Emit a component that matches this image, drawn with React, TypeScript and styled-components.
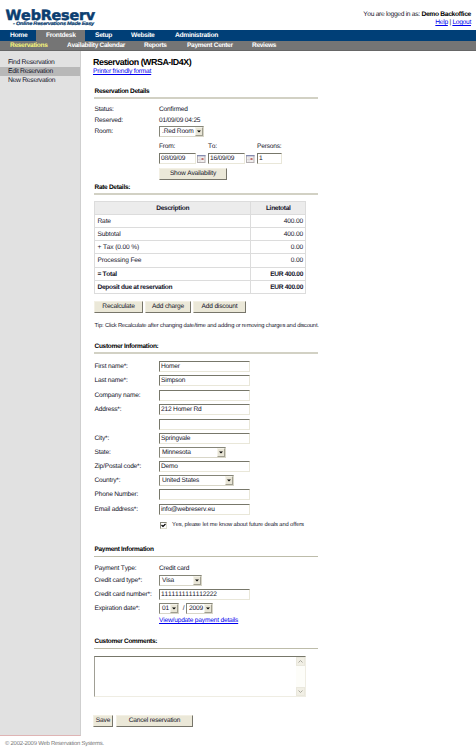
import React from 'react';
import styled, { createGlobalStyle } from 'styled-components';

const Global = createGlobalStyle`
  * { box-sizing: border-box; }
  html, body { margin: 0; padding: 0; background: #fff; }
  body, input, button, textarea {
    font-family: "Liberation Sans", Arial, sans-serif;
    font-size: 6.6px;
    line-height: 11px;
    letter-spacing: -0.19px;
    font-kerning: none;
    color: #14142a;
    text-rendering: geometricPrecision;
  }
  body { overflow: hidden; }
  svg { flex: none; }
`;

const Page = styled.div`
  width: 476px;
  height: 748px;
  display: flex;
  flex-direction: column;
  white-space: nowrap;
`;
const Header = styled.header`
  flex: none;
  height: 30px;
  display: flex;
  justify-content: space-between;
  padding: 8px 5px 0 5px;
`;
const Account = styled.div`
  text-align: right;
  font-size: 6.7px;
  letter-spacing: -0.31px;
  line-height: 8px;
  padding-top: 3px;
  b { color: #000; }
`;
const Link = styled.a`
  color: #0000ee;
  text-decoration: underline;
  text-decoration-thickness: 1px;
  text-underline-offset: 0.5px;
`;
const NavBar = styled.nav<{ $sub?: boolean }>`
  display: flex;
  flex: none;
  height: ${p => (p.$sub ? 10 : 11)}px;
  line-height: ${p => (p.$sub ? 10 : 11)}px;
  background: ${p => (p.$sub ? '#757575' : '#003f77')};
  box-shadow: ${p => (p.$sub ? 'inset 0 -1px #666' : 'none')};
  color: #fff;
  font-weight: bold;
  letter-spacing: -0.3px;
  font-size: ${p => (p.$sub ? 6.55 : 6.7)}px;
`;
const NavItem = styled.span<{ $w: number; $pad?: number; $active?: boolean; $hot?: boolean }>`
  width: ${p => p.$w}px;
  padding-left: ${p => p.$pad ?? 0}px;
  background: ${p => (p.$active ? '#757575' : 'transparent')};
  color: ${p => (p.$hot ? '#f4f47c' : 'inherit')};
`;
const Body = styled.div`
  flex: none;
  display: flex;
  height: 685px;
`;
const Side = styled.aside`
  width: 81px;
  background: #e1e1e1;
  border-right: 1px solid #cfcfcf;
  border-bottom: 1px solid #dfb4b4;
  padding-top: 7px;
`;
const SideItem = styled.div<{ $active?: boolean }>`
  height: 9px;
  line-height: 9px;
  padding-left: 8px;
  font-size: 6.75px;
  letter-spacing: -0.28px;
  background: ${p => (p.$active ? '#b8b8b8' : 'transparent')};
`;
const Main = styled.main`
  padding: 6px 0 0 13px;
  width: 250px;
`;
const Title = styled.h1`
  margin: 0 0 0 -1px;
  font-size: 8.9px;
  letter-spacing: -0.47px;
  line-height: 10px;
  height: 10px;
  color: #000;
`;
const SubLink = styled.div`
  margin: 1px 0 0 -1px;
  height: 8px;
  line-height: 8px;
  font-size: 6.7px;
  letter-spacing: -0.25px;
`;
const Heading = styled.h2<{ $mt: number; $thin?: boolean }>`
  margin: ${p => p.$mt}px 0 0;
  width: 224px;
  height: 13px;
  line-height: 11px;
  padding-left: 0.5px;
  font-size: 6.5px;
  letter-spacing: -0.29px;
  color: #000;
  border-bottom: ${p => (p.$thin ? '1px solid #bdbcaa' : '2px solid #d2d1c4')};
`;
const Row = styled.div<{ $mt?: number }>`
  margin-top: ${p => p.$mt ?? 0}px;
  height: 11px;
  display: flex;
  align-items: center;
`;
const Label = styled.label`
  flex: none;
  width: 65px;
  padding-left: 0.5px;
`;
const Field = styled.input<{ $w?: number }>`
  flex: none;
  width: ${p => p.$w ?? 91}px;
  height: 11px;
  line-height: 8px;
  margin: 0;
  padding: 0 0 0 1px;
  border: 1px solid;
  border-color: #77776a #e9e7d9 #e9e7d9 #77776a;
  border-radius: 0;
  outline: 0;
  background: #fff;
`;
const SelectBox = styled.div<{ $w: number }>`
  flex: none;
  display: flex;
  justify-content: space-between;
  width: ${p => p.$w}px;
  height: 11px;
  line-height: 9px;
  padding-left: 2px;
  border: 1px solid;
  border-color: #858578 #d8d6c8 #d8d6c8 #858578;
  background: #fff;
`;
const Drop = styled.span`
  width: 8px;
  height: 9px;
  display: flex;
  align-items: center;
  justify-content: center;
  background: #e8e5d6;
  border: 1px solid;
  border-color: #f5f3ea #a09e90 #a09e90 #f5f3ea;
`;
const Gap = styled.span<{ $w: number }>`
  flex: none;
  width: ${p => p.$w}px;
  text-align: right;
`;
const Caption = styled.span<{ $w: number }>`
  width: ${p => p.$w}px;
`;
const CalendarSlot = styled.span<{ $w: number }>`
  flex: none;
  width: ${p => p.$w}px;
  padding-left: 1px;
  display: flex;
`;
const Button = styled.button<{ $w: number }>`
  flex: none;
  width: ${p => p.$w}px;
  height: 12px;
  line-height: 10px;
  padding: 0;
  border: 1px solid;
  border-color: #f3f0e4 #77756a #77756a #f3f0e4;
  border-radius: 0;
  background: #ebe8d8;
  text-align: center;
`;
const Buttons = styled.div<{ $mt: number; $gap: number; $ml?: number }>`
  display: flex;
  gap: ${p => p.$gap}px;
  margin: ${p => p.$mt}px 0 0 ${p => p.$ml ?? 0}px;
`;
const Table = styled.div`
  display: grid;
  grid-template-columns: 156px 55px;
  grid-template-rows: 13px repeat(6, 13.17px);
  width: 212px;
  margin-top: 6px;
  border: solid #dcdcdc;
  border-width: 1px 0 0 1px;
`;
const Cell = styled.div<{ $head?: boolean; $num?: boolean; $bold?: boolean }>`
  border: solid #dcdcdc;
  border-width: 0 1px 1px 0;
  padding: 0 2px 0 2.5px;
  line-height: 13px;
  font-size: 6.6px;
  letter-spacing: ${p => (p.$head || p.$bold ? -0.31 : -0.14)}px;
  background: ${p => (p.$head ? '#ececec' : '#fff')};
  text-align: ${p => (p.$head ? 'center' : p.$num ? 'right' : 'left')};
  font-weight: ${p => (p.$head || p.$bold ? 'bold' : 'normal')};
`;
const Tip = styled.div`
  margin-top: 7px;
  height: 11px;
  line-height: 12px;
  font-size: 5.8px;
  letter-spacing: -0.175px;
  padding-left: 0.5px;
`;
const Check = styled.span`
  width: 7px;
  height: 7px;
  margin: 0 5px 0 1px;
  display: flex;
  border: 1px solid;
  border-color: #88887a #dddccc #dddccc #88887a;
`;
const Small = styled.span`
  font-size: 5.8px;
  letter-spacing: -0.12px;
`;
const Comments = styled.div`
  margin-top: 7px;
  width: 212px;
  height: 41px;
  display: flex;
  justify-content: flex-end;
  border: 1px solid;
  border-color: #77776a #efede3 #efede3 #a09f95;
`;
const Scroll = styled.div`
  width: 9px;
  display: flex;
  flex-direction: column;
  justify-content: space-between;
  background: #fdfdf9;
`;
const ScrollButton = styled.span`
  height: 9px;
  display: flex;
  align-items: center;
  justify-content: center;
  background: #f1efe5;
  border: 1px solid #eae8dd;
`;
const Footer = styled.footer`
  flex: none;
  padding: 4px 0 0 5px;
  font-size: 5.9px;
  letter-spacing: -0.22px;
  line-height: 8px;
  height: 12px;
  color: #777;
`;

const Brand = styled.div`
  display: flex;
  flex-direction: column;
  color: #0a3d70;
  svg { overflow: visible; }
`;

const Logo = () => (
  <Brand>
    <svg width="93" height="13" viewBox="0 0 93 13">
      <text x="0.5" y="12" textLength="89.5" lengthAdjust="spacingAndGlyphs" fontFamily="DejaVu Sans, sans-serif" fontWeight="bold" fontSize="14" fill="currentColor" stroke="currentColor" strokeWidth="0.5">WebReserv</text>
    </svg>
    <svg width="93" height="6" viewBox="0 0 93 6">
      <text x="8" y="4" textLength="81" lengthAdjust="spacingAndGlyphs" fontFamily="Liberation Sans, sans-serif" fontWeight="bold" fontStyle="italic" fontSize="4.8" fill="currentColor" stroke="currentColor" strokeWidth="0.2">- Online Reservations Made Easy</text>
    </svg>
  </Brand>
);
const Calendar = () => (
  <svg width="9" height="8" viewBox="0 0 9 8">
    <rect x=".5" y=".5" width="7.5" height="7" fill="#f1eeee" stroke="#b5b0b2" />
    <path d="M0 .7h8.5" stroke="#7f88b0" strokeWidth="1.2" />
    <path d="M3 2v5M1 4.5h7" stroke="#d2ced2" strokeWidth=".6" />
    <rect x="4.5" y="3" width="2" height="2" fill="#c4706c" />
  </svg>
);
const Chevron = ({ up }: { up?: boolean }) => (
  <svg width="5" height="5" viewBox="0 0 5 5">
    <path d={up ? 'M.5 3.5L2.5 1.5L4.5 3.5' : 'M.5 1.5L2.5 3.5L4.5 1.5'} fill="none" stroke="#aaa99f" />
  </svg>
);
const Select = ({ w, children }: { w: number; children: React.ReactNode }) => (
  <SelectBox $w={w}>
    {children}
    <Drop>
      <svg width="4" height="3" viewBox="0 0 4 3"><path d="M0 .5h4L2 2.5z" fill="#000" /></svg>
    </Drop>
  </SelectBox>
);

const rates: [string, string, boolean?][] = [
  ['Rate', '400.00'],
  ['Subtotal', '400.00'],
  ['+ Tax (0.00 %)', '0.00'],
  ['Processing Fee', '0.00'],
  ['= Total', 'EUR 400.00', true],
  ['Deposit due at reservation', 'EUR 400.00', true],
];

export default function App() {
  return (
    <Page>
      <Global />
      <Header>
        <Logo />
        <Account>
          <div>You are logged in as: <b>Demo Backoffice</b></div>
          <div><Link>Help</Link> | <Link>Logout</Link></div>
        </Account>
      </Header>
      <NavBar>
        <NavItem $w={36} $pad={10}>Home</NavItem>
        <NavItem $w={49} $pad={10} $active>Frontdesk</NavItem>
        <NavItem $w={46} $pad={10}>Setup</NavItem>
        <NavItem $w={44}>Website</NavItem>
        <NavItem $w={60}>Administration</NavItem>
      </NavBar>
      <NavBar $sub>
        <NavItem $w={67} $pad={10} $hot>Reservations</NavItem>
        <NavItem $w={77}>Availability Calendar</NavItem>
        <NavItem $w={43}>Reports</NavItem>
        <NavItem $w={65}>Payment Center</NavItem>
        <NavItem $w={40}>Reviews</NavItem>
      </NavBar>
      <Body>
        <Side>
          <SideItem>Find Reservation</SideItem>
          <SideItem $active>Edit Reservation</SideItem>
          <SideItem>New Reservation</SideItem>
        </Side>
        <Main>
          <Title>Reservation (WRSA-ID4X)</Title>
          <SubLink><Link>Printer friendly format</Link></SubLink>
          <Heading $mt={10}>Reservation Details</Heading>
          <Row $mt={5}><Label>Status:</Label>Confirmed</Row>
          <Row><Label>Reserved:</Label>01/09/09 04:25</Row>
          <Row><Label>Room:</Label><Select w={45}>.Red Room</Select></Row>
          <Row $mt={4}>
            <Label />
            <Caption $w={49}>From:</Caption>
            <Caption $w={49}>To:</Caption>
            <Caption $w={20}>Persons:</Caption>
          </Row>
          <Row $mt={1}>
            <Label />
            <Field $w={37} defaultValue="08/09/09" />
            <CalendarSlot $w={12}><Calendar /></CalendarSlot>
            <Field $w={37} defaultValue="16/09/09" />
            <CalendarSlot $w={12}><Calendar /></CalendarSlot>
            <Field $w={25} defaultValue="1" />
          </Row>
          <Buttons $mt={4} $gap={0} $ml={65}><Button $w={68}>Show Availability</Button></Buttons>
          <Heading $mt={2}>Rate Details:</Heading>
          <Table>
            <Cell $head>Description</Cell>
            <Cell $head>Linetotal</Cell>
            {rates.map(([name, total, bold]) => (
              <React.Fragment key={name}>
                <Cell $bold={bold}>{name}</Cell>
                <Cell $num $bold={bold}>{total}</Cell>
              </React.Fragment>
            ))}
          </Table>
          <Buttons $mt={7} $gap={2}>
            <Button $w={49}>Recalculate</Button>
            <Button $w={46}>Add charge</Button>
            <Button $w={53}>Add discount</Button>
          </Buttons>
          <Tip>Tip: Click Recalculate after changing date/time and adding or removing charges and discount.</Tip>
          <Heading $mt={10}>Customer Information:</Heading>
          <Row $mt={7}><Label>First name*:</Label><Field defaultValue="Homer" /></Row>
          <Row $mt={3}><Label>Last name*:</Label><Field defaultValue="Simpson" /></Row>
          <Row $mt={4}><Label>Company name:</Label><Field /></Row>
          <Row $mt={3}><Label>Address*:</Label><Field defaultValue="212 Homer Rd" /></Row>
          <Row $mt={4}><Label /><Field /></Row>
          <Row $mt={3}><Label>City*:</Label><Field defaultValue="Springvale" /></Row>
          <Row $mt={3}><Label>State:</Label><Select w={67}>Minnesota</Select></Row>
          <Row $mt={3}><Label>Zip/Postal code*:</Label><Field defaultValue="Demo" /></Row>
          <Row $mt={3}><Label>Country*:</Label><Select w={75}>United States</Select></Row>
          <Row $mt={3}><Label>Phone Number:</Label><Field /></Row>
          <Row $mt={4}><Label>Email address*:</Label><Field defaultValue="info@webreserv.eu" /></Row>
          <Row $mt={5}>
            <Label />
            <Check>
              <svg width="5" height="5" viewBox="0 0 5 5"><path d="M.5 2L2 3.5L4.5 1" fill="none" stroke="#000" strokeWidth="1.2" /></svg>
            </Check>
            <Small>Yes, please let me know about future deals and offers</Small>
          </Row>
          <Heading $mt={13} $thin>Payment Information</Heading>
          <Row $mt={6}><Label>Payment Type:</Label>Credit card</Row>
          <Row $mt={1}><Label>Credit card type*:</Label><Select w={43}>Visa</Select></Row>
          <Row $mt={3}><Label>Credit card number*:</Label><Field defaultValue="1111111111112222" /></Row>
          <Row $mt={3}>
            <Label>Expiration date*:</Label>
            <Select w={20}>01</Select>
            <Gap $w={7}>/&nbsp;</Gap>
            <Select w={27}>2009</Select>
          </Row>
          <Row $mt={1}><Label /><Link>View/update payment details</Link></Row>
          <Heading $mt={10} $thin>Customer Comments:</Heading>
          <Comments>
            <Scroll>
              <ScrollButton><Chevron up /></ScrollButton>
              <ScrollButton><Chevron /></ScrollButton>
            </Scroll>
          </Comments>
          <Buttons $mt={18} $gap={3} $ml={-1}>
            <Button $w={20}>Save</Button>
            <Button $w={77}>Cancel reservation</Button>
          </Buttons>
        </Main>
      </Body>
      <Footer>© 2002-2009 Web Reservation Systems.</Footer>
    </Page>
  );
}
